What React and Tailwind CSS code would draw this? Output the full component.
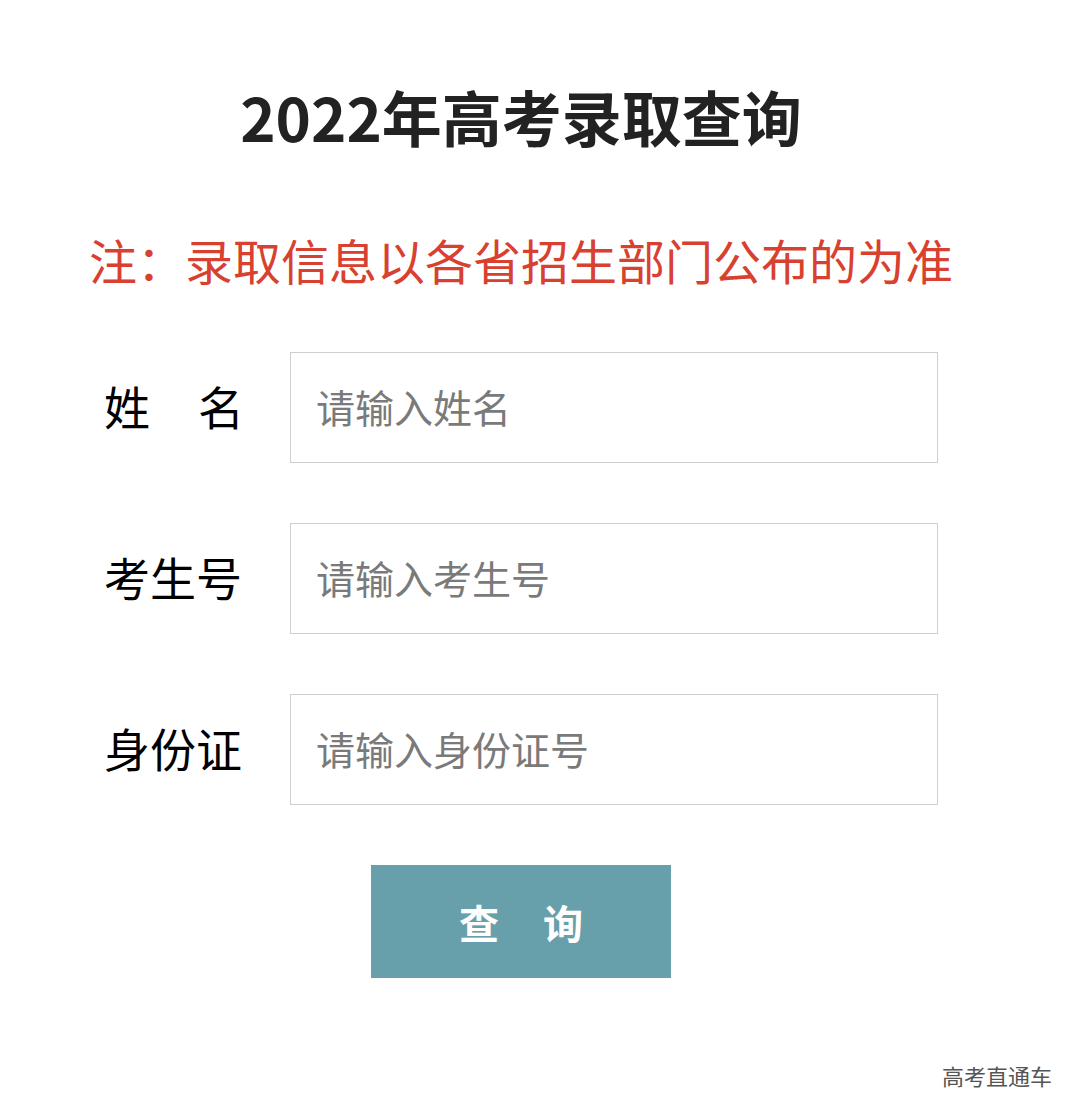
export default function App() {
  const fields = [
    { label: ["姓", "名"], placeholder: "请输入姓名" },
    { label: ["考生号"], placeholder: "请输入考生号" },
    { label: ["身份证"], placeholder: "请输入身份证号" },
  ];

  return (
    <div
      className="w-[1080px] h-[1118px] bg-white flex flex-col"
      style={{ fontFamily: '"Noto Sans CJK SC", "Noto Sans", sans-serif' }}
    >
      <div className="w-[1042px] flex flex-col items-center">
        <h1 className="mt-[84px] text-[60px] leading-[64px] font-bold text-[#222222]">
          2022年高考录取查询
        </h1>

        <p className="mt-[85px] text-[48px] leading-[52px] text-[#d8402f]">
          注：录取信息以各省招生部门公布的为准
        </p>

        <div className="mt-[67px] flex flex-col gap-[60px]">
          {fields.map((f, i) => (
            <div key={i} className="flex items-center gap-[46px]">
              <div className="w-[140px] shrink-0 whitespace-nowrap flex justify-between text-[46px] leading-none text-black pb-[6px]">
                {f.label.map((t) => (
                  <span key={t}>{t}</span>
                ))}
              </div>
              <input
                type="text"
                placeholder={f.placeholder}
                className="w-[648px] h-[111px] border border-[#cfcfcf] pl-[25px] pr-[26px] pb-[4px] text-[39px] text-[#333] placeholder:text-[#7a7a7a] outline-none"
              />
            </div>
          ))}
        </div>

        <button
          type="button"
          className="mt-[60px] w-[300px] h-[113px] bg-[#67a0aa] text-white text-[40px] font-bold flex items-center justify-center gap-[44px]"
        >
          <span>查</span>
          <span>询</span>
        </button>
      </div>

      <div className="mt-auto mb-[26px] pr-[28px] text-right text-[22px] text-[#555]">
        高考直通车
      </div>
    </div>
  );
}
